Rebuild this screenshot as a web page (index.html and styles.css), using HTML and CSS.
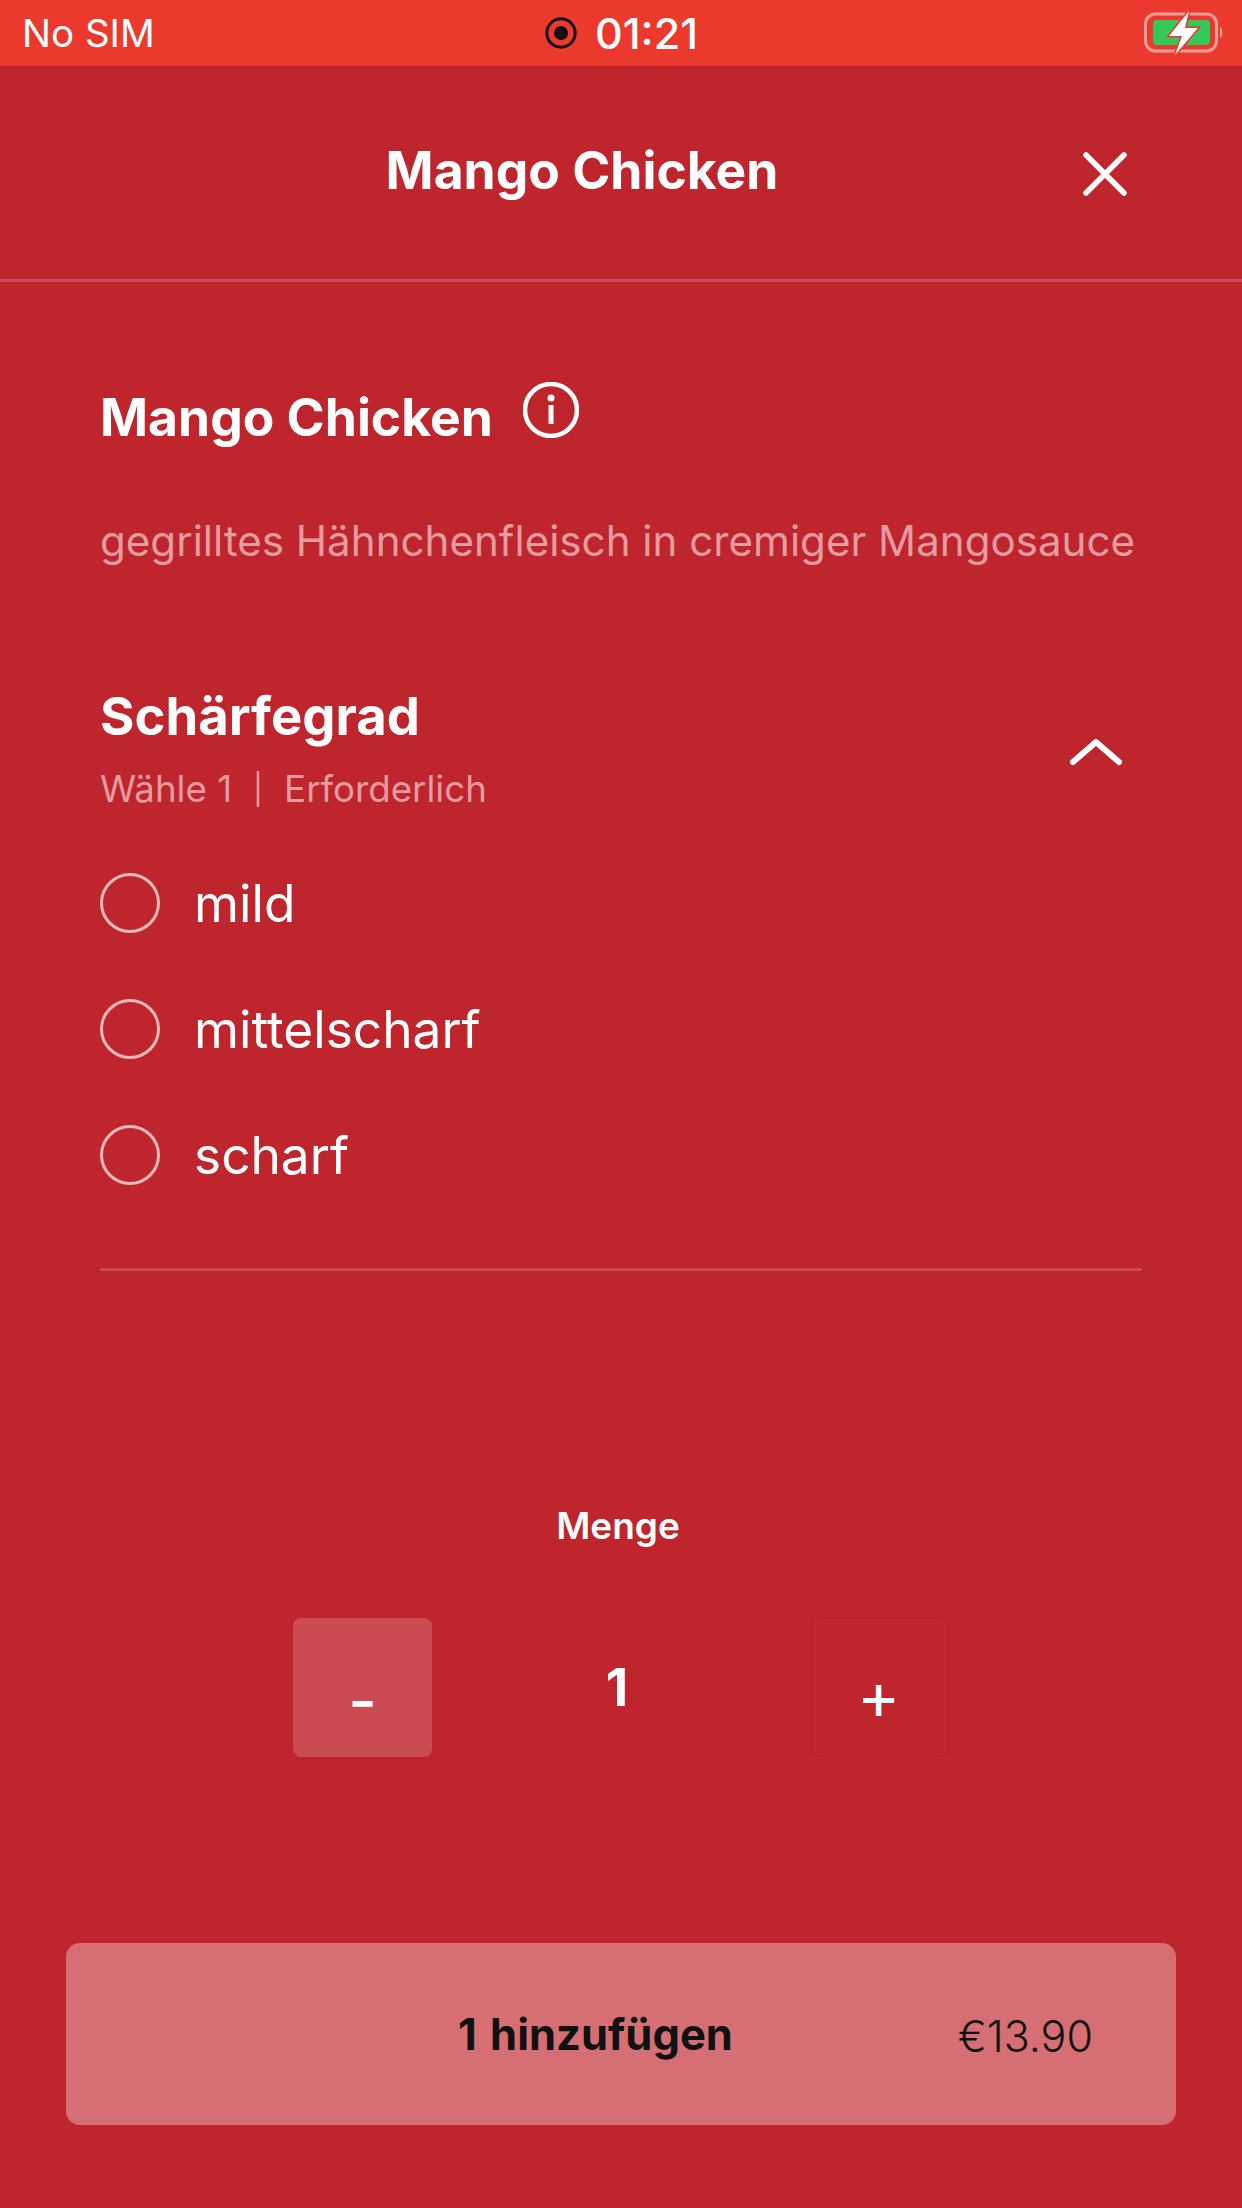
FILE: index.html
```html
<!DOCTYPE html>
<html lang="de">
<head>
<meta charset="utf-8">
<title>Mango Chicken</title>
<link rel="stylesheet" href="styles.css">
</head>
<body>
<div class="status">
  <div class="carrier">No SIM</div>
  <div class="clock">
    <svg class="rec" viewBox="0 0 32 32"><circle cx="16" cy="16" r="14.2" fill="none" stroke="#111" stroke-width="3"/><circle cx="16" cy="16" r="7" fill="#111"/></svg>
    <span>01:21</span>
  </div>
  <div class="batt">
    <svg class="batt-ico" viewBox="0 0 82 44">
      <rect x="1.5" y="3" width="71" height="37" rx="10" fill="none" stroke="#f4a09a" stroke-width="3"/>
      <rect x="9" y="9" width="57" height="25" rx="4" fill="#34c759"/>
      <path d="M76 16c3 1 3 10 0 11z" fill="#f4a09a"/>
      <path d="M45 0 25 25h13l-7 19 23-27H41z" fill="#fff" stroke="#ec392e" stroke-width="3" paint-order="stroke"/>
    </svg>
  </div>
</div>

<header class="top">
  <h1 class="top-title">Mango Chicken</h1>
  <svg class="close" viewBox="0 0 44 44"><path d="M3 3 41 41M41 3 3 41" stroke="#fff" stroke-width="5.5" stroke-linecap="round" fill="none"/></svg>
</header>

<main class="body">
  <div class="item-head">
    <h2 class="item-name">Mango Chicken</h2>
    <svg class="info" viewBox="0 0 56 56"><circle cx="28" cy="28" r="26" fill="none" stroke="#fff" stroke-width="4.5"/><circle cx="28" cy="16" r="3.5" fill="#fff"/><rect x="25.5" y="23" width="5" height="19" fill="#fff"/></svg>
  </div>
  <p class="desc">gegrilltes Hähnchenfleisch in cremiger Mangosauce</p>

  <section class="group">
    <div class="group-head">
      <div>
        <h3 class="group-title">Schärfegrad</h3>
        <div class="group-sub">Wähle 1<span class="sep">|</span>Erforderlich</div>
      </div>
      <svg class="chev" viewBox="0 0 54 28"><path d="M4 24 27 4l23 20" fill="none" stroke="#fff" stroke-width="6" stroke-linecap="round" stroke-linejoin="round"/></svg>
    </div>
    <ul class="opts">
      <li class="opt"><span class="radio"></span>mild</li>
      <li class="opt"><span class="radio"></span>mittelscharf</li>
      <li class="opt"><span class="radio"></span>scharf</li>
    </ul>
  </section>

  <div class="qty-label">Menge</div>
  <div class="qty">
    <div class="qty-btn minus">-</div>
    <div class="qty-num">1</div>
    <div class="qty-btn plus">+</div>
  </div>
</main>

<div class="cta">
  <span class="cta-label">1 hinzufügen</span>
  <span class="cta-price">€13.90</span>
</div>
</body>
</html>
```
FILE: styles.css
```css
* { box-sizing: border-box; }
html, body { margin: 0; padding: 0; }
body {
  width: 1242px;
  height: 2208px;
  overflow: hidden;
  background: #be252d;
  color: #fff;
  font-family: Inter, "Liberation Sans", sans-serif;
  display: flex;
  flex-direction: column;
}
h1, h2, h3, p, ul { margin: 0; padding: 0; }
ul { list-style: none; }

.status {
  height: 66px;
  flex: none;
  background: #ec392e;
  display: grid;
  grid-template-columns: 1fr auto 1fr;
  align-items: center;
  padding: 0 18px 0 22px;
  font-size: 38.5px;
}
.clock { display: flex; align-items: center; gap: 18px; font-weight: 500; font-size: 43px; margin-right: 3px; }
.rec { width: 32px; height: 32px; }
.batt { display: flex; justify-content: flex-end; }
.batt-ico { width: 82px; height: 44px; margin-right: -2px; }

.top {
  height: 216px;
  flex: none;
  border-bottom: 3px solid #cb4a51;
  display: flex;
  align-items: center;
  justify-content: center;
  position: relative;
  padding-bottom: 7px;
}
.top-title { font-size: 51.6px; font-weight: 650; margin-right: 78px; line-height: 60px; margin-top: 2px; }
.close { position: absolute; right: 115px; top: 86px; width: 44px; height: 44px; }

.body { padding: 0 100px; }
.item-head { display: flex; align-items: center; gap: 30px; margin-top: 95px; height: 80px; }
.item-name { font-size: 51.6px; font-weight: 650; line-height: 60px; }
.info { width: 56px; height: 56px; margin-top: -15px; }
.desc { font-size: 42.1px; color: #e59ca0; margin-top: 61px; line-height: 46px; }

.group { margin-top: 123px; border-bottom: 3px solid #cb4a51; padding-bottom: 83px; }
.group-head { display: flex; justify-content: space-between; align-items: center; padding-right: 19px; }
.group-title { font-size: 52.6px; font-weight: 650; line-height: 58px; }
.group-sub { font-size: 36.7px; color: #e59ca0; line-height: 42px; margin-top: 23px; }
.sep { font-size: 30px; margin: 0 21px; vertical-align: 2px; }
.chev { width: 54px; height: 28px; margin-top: 6px; }
.opts { margin-top: 63px; display: flex; flex-direction: column; gap: 66px; }
.opt { display: flex; align-items: center; gap: 34px; font-size: 51.4px; height: 60px; }
.radio { width: 60px; height: 60px; border-radius: 50%; border: 3px solid #eeb9bb; }

.qty-label { text-align: center; font-size: 37px; font-weight: 600; margin-top: 235px; line-height: 40px; padding-right: 6px; }
.qty {
  display: grid;
  grid-template-columns: 139px 378px 140px;
  justify-content: start;
  margin-left: 193px;
  margin-top: 72px;
}
.qty-btn { height: 139px; border-radius: 8px; display: flex; align-items: flex-end; justify-content: center; font-size: 52px; padding-bottom: 26px; }
.minus { background: #ca4b52; font-weight: 500; font-size: 62px; padding-bottom: 19px; }
.plus { border: 1px solid #b7222a; font-weight: 400; font-size: 66px; padding-bottom: 21px; padding-right: 3px; }
.qty-num { text-align: center; font-size: 52px; font-weight: 700; padding-top: 38px; padding-right: 8px; }

.cta {
  position: absolute;
  left: 66px;
  top: 1943px;
  width: 1110px;
  height: 182px;
  background: #d56f74;
  border-radius: 14px;
  color: #111;
  font-size: 43.5px;
}
.cta-label { position: absolute; left: 392px; top: 67px; font-weight: 700; line-height: 48px; word-spacing: 3px; }
.cta-price { position: absolute; right: 83px; top: 69px; line-height: 48px; font-size: 43px; font-weight: 300; }
```
